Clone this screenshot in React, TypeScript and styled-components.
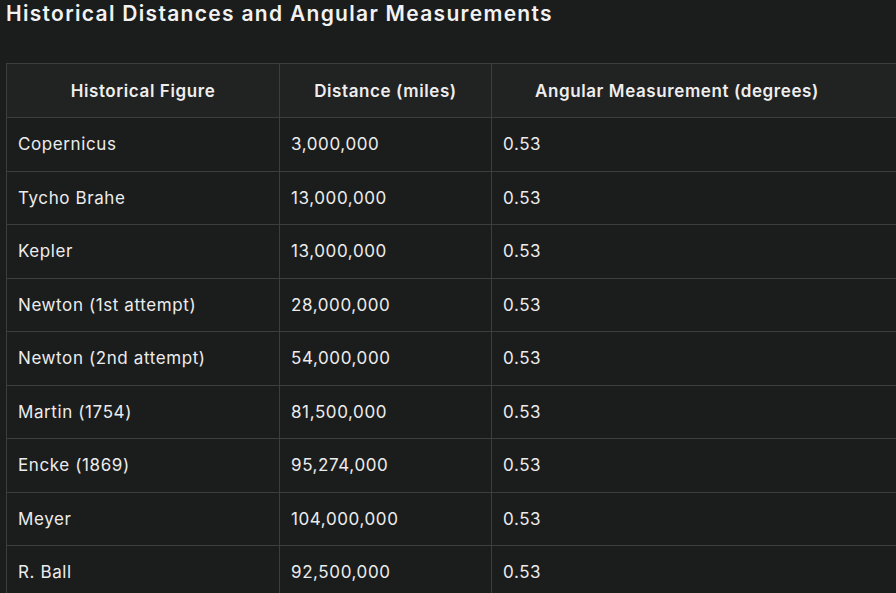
import React from "react";
import styled, { createGlobalStyle } from "styled-components";

const GlobalStyle = createGlobalStyle`
  body {
    margin: 0;
    background: #1b1c1c;
    font-family: Inter, "Liberation Sans", sans-serif;
    color: #ececec;
    overflow: hidden;
  }
`;

const Page = styled.div`
  padding: 0 0 0 6px;
  width: 1000px;
`;

const Title = styled.h3`
  margin: 0;
  padding-top: 0;
  height: 63px;
  font-size: 21px;
  font-weight: 600;
  letter-spacing: 1.3px;
  line-height: 28px;
  color: #f2f2f2;
`;

const Table = styled.table`
  border-collapse: collapse;
  width: 1000px;
  font-size: 17px;
  letter-spacing: 0.6px;
`;

const HeadCell = styled.th<{ $w?: number; $left?: boolean }>`
  height: 53px;
  padding: 0 12px;
  padding-left: ${({ $left }) => ($left ? "43px" : "12px")};
  width: ${({ $w }) => ($w ? `${$w}px` : "auto")};
  background: #212222;
  border: 1px solid #3d3d3d;
  font-weight: 600;
  text-align: ${({ $left }) => ($left ? "left" : "center")};
  color: #eeeeee;
`;

const Cell = styled.td`
  height: 52.5px;
  padding: 0 11px;
  border: 1px solid #3d3d3d;
  font-weight: 400;
  color: #ececec;
`;

const rows = [
  ["Copernicus", "3,000,000"],
  ["Tycho Brahe", "13,000,000"],
  ["Kepler", "13,000,000"],
  ["Newton (1st attempt)", "28,000,000"],
  ["Newton (2nd attempt)", "54,000,000"],
  ["Martin (1754)", "81,500,000"],
  ["Encke (1869)", "95,274,000"],
  ["Meyer", "104,000,000"],
  ["R. Ball", "92,500,000"],
];

export default function App() {
  return (
    <Page>
      <GlobalStyle />
      <Title>Historical Distances and Angular Measurements</Title>
      <Table>
        <thead>
          <tr>
            <HeadCell $w={248}>Historical Figure</HeadCell>
            <HeadCell $w={187}>Distance (miles)</HeadCell>
            <HeadCell $left>Angular Measurement (degrees)</HeadCell>
          </tr>
        </thead>
        <tbody>
          {rows.map(([name, dist]) => (
            <tr key={name}>
              <Cell>{name}</Cell>
              <Cell>{dist}</Cell>
              <Cell>0.53</Cell>
            </tr>
          ))}
        </tbody>
      </Table>
    </Page>
  );
}
